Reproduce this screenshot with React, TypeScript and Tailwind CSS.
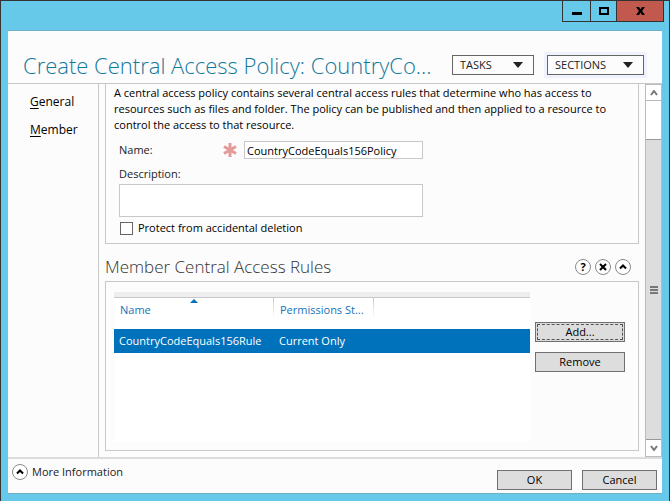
import type { ReactNode } from "react";

function RoundButton({ label, children }: { label: string; children: ReactNode }) {
  return (
    <button
      type="button"
      aria-label={label}
      className="flex size-4 shrink-0 items-center justify-center rounded-full border border-[#8a8a8a] bg-white text-black"
    >
      {children}
    </button>
  );
}

function ChevronUp() {
  return (
    <svg viewBox="0 0 8 8" className="size-2" fill="none" stroke="currentColor" strokeWidth="2">
      <path d="M1 5.500 4 2.500 7 5.500" />
    </svg>
  );
}

function MenuButton({ children }: { children: ReactNode }) {
  return (
    <button
      type="button"
      className="flex h-5 w-full items-center justify-between border border-[#666] bg-[#fcfcfc] pr-2.5 pl-[7px] text-[11px] text-[#222]"
    >
      {children}
      <svg viewBox="0 0 10 6" className="h-1.5 w-2.5" fill="#222">
        <path d="M0 0h10L5 6z" />
      </svg>
    </button>
  );
}

function PushButton({ children, focused = false }: { children: ReactNode; focused?: boolean }) {
  return (
    <button type="button" className="h-5 w-full border border-[#707070] bg-[#ddd] p-px text-[11px] leading-4 text-black">
      <span className={focused ? "block border border-dashed border-[#555] leading-[14px]" : "block"}>{children}</span>
    </button>
  );
}

function TitleBar() {
  return (
    <div className="flex h-[29px] items-start justify-end pr-[5px]">
      <div className="flex h-[21px] border border-t-0 border-[#333]">
        <button type="button" aria-label="Minimize" className="flex w-[27px] items-center justify-center">
          <svg viewBox="0 0 10 10" className="size-2.5">
            <path d="M0 6h10v3H0z" />
          </svg>
        </button>
        <button type="button" aria-label="Maximize" className="flex w-[26px] items-center justify-center border-l border-[#333]">
          <svg viewBox="0 0 10 8" className="h-2 w-2.5" fill="none" stroke="black" strokeWidth="2">
            <path d="M1 1h8v6H1z" />
          </svg>
        </button>
        <button type="button" aria-label="Close" className="flex w-[47px] items-center justify-center border-l border-[#333] bg-[#c2594f]">
          <svg viewBox="0 0 9 8" className="h-2 w-[9px]">
            <path d="M0 0h3l1.500 2.200L6 0h3L6.100 4 9 8H6L4.500 5.800 3 8H0l2.900-4z" />
          </svg>
        </button>
      </div>
    </div>
  );
}

function Header() {
  return (
    <header className="flex h-[53px] items-center border-b border-[#c8c8c8] px-[15px] pt-4">
      <h1 className="min-w-0 flex-1 overflow-hidden text-[22px] leading-8 font-light whitespace-nowrap text-[#13789a]">
        Create Central Access Policy: CountryCo...
      </h1>
      <div className="w-[82px] shrink-0">
        <MenuButton>TASKS</MenuButton>
      </div>
      <div className="ml-2.5 w-[103px] shrink-0 bg-[#eff2fd] p-[3px]">
        <MenuButton>SECTIONS</MenuButton>
      </div>
    </header>
  );
}

function Sidebar() {
  return (
    <nav className="flex w-[91px] shrink-0 flex-col gap-2 border-r border-[#c8c8c8] pt-2 pl-[22px] text-xs leading-5 text-black">
      <a href="#general"><span className="underline underline-offset-2">G</span>eneral</a>
      <a href="#member"><span className="underline underline-offset-2">M</span>ember</a>
    </nav>
  );
}

function GeneralSection() {
  return (
    <section id="general" className="border border-t-0 border-[#c8c8c8] px-[13px] pt-px pb-2 text-[11px]">
      <p className="-ml-[5px] leading-4 text-black">
        A central access policy contains several central access rules that determine who has access to
        <br />
        resources such as files and folder. The policy can be published and then applied to a resource to
        <br />
        control the access to that resource.
      </p>
      <div className="mt-2 flex w-[304px] items-center">
        <label htmlFor="name" className="flex-1 text-[#222]">Name:</label>
        <svg viewBox="0 0 14 14" className="mr-[7px] size-3.5" stroke="#e59a9a" strokeWidth="3">
          <path d="M7 0v14M1 3.500l12 7M13 3.500l-12 7" />
        </svg>
        <input
          id="name"
          defaultValue="CountryCodeEquals156Policy"
          className="h-[18px] w-[179px] border border-[#c8c8c8] bg-white px-0.5 text-black outline-none"
        />
      </div>
      <label htmlFor="description" className="mt-[7px] block leading-4 text-[#222]">Description:</label>
      <textarea
        id="description"
        className="mt-0.5 block h-[33px] w-[304px] resize-none border border-[#c8c8c8] bg-white outline-none"
      />
      <label className="mt-1 flex items-center gap-[5px] pl-px leading-[14px] text-black">
        <input type="checkbox" className="size-[13px] appearance-none border border-[#666] bg-white" />
        Protect from accidental deletion
      </label>
    </section>
  );
}

function ColumnDivider() {
  return <span className="absolute top-0 right-0 h-5 w-px bg-linear-to-b from-[#c8c8c8] to-white" />;
}

function RulesTable() {
  return (
    <div className="h-[150px] w-[416px] shrink-0 border-t-[5px] border-[#eee] bg-white">
      <table className="w-full table-fixed border-separate border-spacing-0 border-t border-[#c8c8c8] text-left text-[11px]">
        <thead>
          <tr className="h-[31px] align-top leading-4 text-[#1273b8]">
            <th className="relative w-40 pt-1 pl-1.5 font-normal">
              Name
              <svg viewBox="0 0 8 4" className="absolute top-px left-[76px] h-1 w-2" fill="#0072bc">
                <path d="M4 0l4 4H0z" />
              </svg>
              <ColumnDivider />
            </th>
            <th className="relative w-[100px] pt-1 pl-1.5 font-normal">
              Permissions St...
              <ColumnDivider />
            </th>
            <th aria-label="Empty column" />
          </tr>
        </thead>
        <tbody>
          <tr className="h-6 whitespace-nowrap text-white *:bg-[#0072bc]">
            <td className="pl-[5px]">CountryCodeEquals156Rule</td>
            <td className="pl-[5px]">Current Only</td>
            <td />
          </tr>
        </tbody>
      </table>
    </div>
  );
}

function MemberSection() {
  return (
    <section id="member">
      <div className="flex h-[37px] items-center pt-2 pr-2">
        <h2 className="flex-1 text-[17px] leading-6 font-light text-[#333]">Member Central Access Rules</h2>
        <div className="flex gap-1">
          <RoundButton label="Help">
            <span className="text-[11px] leading-3 font-bold">?</span>
          </RoundButton>
          <RoundButton label="Remove section">
            <svg viewBox="0 0 8 8" className="size-2" stroke="currentColor" strokeWidth="2">
              <path d="M1 1l6 6M7 1 1 7" />
            </svg>
          </RoundButton>
          <RoundButton label="Collapse section"><ChevronUp /></RoundButton>
        </div>
      </div>
      <div className="flex border border-[#c8c8c8] pt-2.5 pr-[13px] pb-2 pl-2">
        <RulesTable />
        <div className="ml-auto flex w-[90px] flex-col gap-2.5 pt-[30px]">
          <PushButton focused>Add...</PushButton>
          <PushButton>Remove</PushButton>
        </div>
      </div>
    </section>
  );
}

function ScrollBar() {
  return (
    <div className="flex w-[17px] shrink-0 flex-col border border-[#bbb] bg-white text-[#777]">
      <button type="button" aria-label="Scroll up" className="flex h-4 items-center justify-center border-b border-[#bbb]">
        <svg viewBox="0 0 8 6" className="h-1.5 w-2" fill="none" stroke="currentColor" strokeWidth="2">
          <path d="M1 5l3-4 3 4" />
        </svg>
      </button>
      <div className="flex flex-1 flex-col pt-[38px]">
        <div className="flex flex-1 flex-col items-center justify-center border-y border-[#999] bg-[#ddd]">
          <div className="flex w-2 flex-col gap-px">
            <div className="h-0.5 bg-[#777]" />
            <div className="h-0.5 bg-[#777]" />
            <div className="h-0.5 bg-[#777]" />
          </div>
        </div>
      </div>
      <button type="button" aria-label="Scroll down" className="flex h-4 items-center justify-center">
        <svg viewBox="0 0 8 6" className="h-1.5 w-2" fill="none" stroke="currentColor" strokeWidth="2">
          <path d="M1 1l3 4 3-4" />
        </svg>
      </button>
    </div>
  );
}

function Footer() {
  return (
    <footer className="flex h-9 items-center border-t-2 border-[#dcdcdc] pr-[5px] pl-1">
      <div className="mb-2 flex flex-1 items-center gap-1 text-[11px] text-[#222]">
        <RoundButton label="More Information"><ChevronUp /></RoundButton>
        More Information
      </div>
      <div className="mt-1 flex gap-2.5">
        <div className="w-[75px]"><PushButton>OK</PushButton></div>
        <div className="w-[75px]"><PushButton>Cancel</PushButton></div>
      </div>
    </footer>
  );
}

export default function App() {
  return (
    <div className="flex min-h-screen flex-col border border-[#333] bg-[#66c9ea] pb-[7px] font-['Open_Sans','Noto_Sans',sans-serif]">
      <TitleBar />
      <div className="mx-[7px] flex flex-1 flex-col border-y border-[#6fb0c8] bg-[#fcfcfc]">
        <Header />
        <div className="flex flex-1">
          <Sidebar />
          <main className="min-w-0 flex-1 px-1.5 pb-1.5">
            <GeneralSection />
            <MemberSection />
          </main>
          <ScrollBar />
        </div>
        <Footer />
      </div>
    </div>
  );
}
